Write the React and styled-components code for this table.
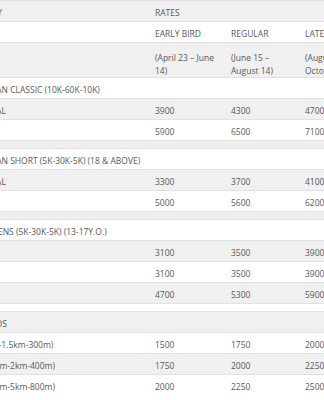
import React from 'react';
import styled, { createGlobalStyle } from 'styled-components';

const Global = createGlobalStyle`
  html, body {
    margin: 0;
    padding: 0;
    background: #ffffff;
    overflow: hidden;
  }
`;

const Wrap = styled.div`
  width: 324px;
  height: 400px;
  overflow: hidden;
`;

const Table = styled.table`
  margin-left: -49px;
  border-collapse: collapse;
  table-layout: fixed;
  width: 428px;
  font-family: "Open Sans", "Liberation Sans", sans-serif;
  font-size: 8.5px;
  line-height: 14px;
  color: #585858;
  tr:nth-child(odd) {
    background: #f0f0f0;
  }
  tr:nth-child(even) {
    background: #ffffff;
  }
`;

const Row = styled.tr`
  border-top: 1px solid #e2e2e2;
  height: ${(p) => (p.$blank ? '8px' : 'auto')};
`;

const Cell = styled.td`
  padding: ${(p) => (p.$blank ? '0' : p.$tall ? '8px 8px 0' : '5px 8px 1px')};
  line-height: ${(p) => (p.$tall ? '13px' : '14px')};
  vertical-align: top;
  text-align: left;
  white-space: ${(p) => (p.$nowrap ? 'nowrap' : 'normal')};
  overflow: hidden;
`;

const sections = [
  {
    title: 'POWERMAN CLASSIC (10K-60K-10K)',
    rows: [
      ['INDIVIDUAL', '3900', '4300', '4700'],
      ['RELAY', '5900', '6500', '7100'],
    ],
  },
  {
    title: 'POWERMAN SHORT (5K-30K-5K) (18 & ABOVE)',
    rows: [
      ['INDIVIDUAL', '3300', '3700', '4100'],
      ['RELAY', '5000', '5600', '6200'],
    ],
  },
  {
    title: 'POWERTEENS (5K-30K-5K) (13-17Y.O.)',
    rows: [
      ['MALE', '3100', '3500', '3900'],
      ['FEMALE', '3100', '3500', '3900'],
      ['RELAY', '4700', '5300', '5900'],
    ],
  },
  {
    title: 'POWERKIDS',
    rows: [
      ['6-9 (500m-1.5km-300m)', '1500', '1750', '2000'],
      ['10-11y (1km-2km-400m)', '1750', '2000', '2250'],
      ['12-14y (2km-5km-800m)', '2000', '2250', '2500'],
    ],
  },
];

export default function App() {
  return (
    <Wrap>
      <Global />
      <Table>
        <colgroup>
          <col style={{ width: 196 }} />
          <col style={{ width: 76 }} />
          <col style={{ width: 74 }} />
          <col style={{ width: 82 }} />
        </colgroup>
        <tbody>
          <Row>
            <Cell>CATEGORY</Cell>
            <Cell colSpan={3}>RATES</Cell>
          </Row>
          <Row>
            <Cell></Cell>
            <Cell $nowrap>EARLY BIRD</Cell>
            <Cell $nowrap>REGULAR</Cell>
            <Cell $nowrap>LATE REGISTRATION</Cell>
          </Row>
          <Row>
            <Cell $tall></Cell>
            <Cell $tall>(April 23 – June 14)</Cell>
            <Cell $tall>(June 15 – August 14)</Cell>
            <Cell $tall>(August 15 – October 1)</Cell>
          </Row>
          {sections.map((s, i) => (
            <React.Fragment key={s.title}>
              {i > 0 && (
                <Row $blank>
                  <Cell $blank colSpan={4}></Cell>
                </Row>
              )}
              <Row>
                <Cell colSpan={4} $nowrap>{s.title}</Cell>
              </Row>
              {s.rows.map((r, j) => (
                <Row key={j}>
                  <Cell $nowrap>{r[0]}</Cell>
                  <Cell>{r[1]}</Cell>
                  <Cell>{r[2]}</Cell>
                  <Cell>{r[3]}</Cell>
                </Row>
              ))}
            </React.Fragment>
          ))}
        </tbody>
      </Table>
    </Wrap>
  );
}
